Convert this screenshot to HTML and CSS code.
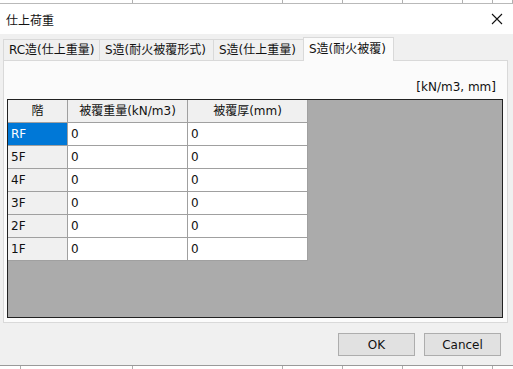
FILE: index.html
```html
<!DOCTYPE html>
<html>
<head>
<meta charset="utf-8">
<title>仕上荷重</title>
<link rel="stylesheet" href="styles.css">
</head>
<body>
<div class="app-strip">
	<span></span><span></span><span></span><span></span><span></span><span></span><span></span>
</div>
<div class="dialog">
	<div class="titlebar">
		<span class="title">仕上荷重</span>
		<svg class="close" width="12" height="12" viewBox="0 0 12 12"><path d="M1 1 L11 11 M11 1 L1 11" stroke="#111" stroke-width="1.1" fill="none"/></svg>
	</div>
	<div class="dialog-body">
		<div class="tabs">
			<div class="tab tab-rc">RC造(仕上重量)</div>
			<div class="tab tab-sf">S造(耐火被覆形式)</div>
			<div class="tab tab-sw">S造(仕上重量)</div>
			<div class="tab tab-sc active">S造(耐火被覆)</div>
		</div>
		<div class="panel">
			<div class="unit">[kN/m3, mm]</div>
			<div class="gridview">
				<div class="grid">
					<div class="cell head center">階</div>
					<div class="cell head center">被覆重量(kN/m3)</div>
					<div class="cell head center">被覆厚(mm)</div>

					<div class="cell rowhead selected">RF</div>
					<div class="cell">0</div>
					<div class="cell">0</div>

					<div class="cell rowhead">5F</div>
					<div class="cell">0</div>
					<div class="cell">0</div>

					<div class="cell rowhead">4F</div>
					<div class="cell">0</div>
					<div class="cell">0</div>

					<div class="cell rowhead">3F</div>
					<div class="cell">0</div>
					<div class="cell">0</div>

					<div class="cell rowhead">2F</div>
					<div class="cell">0</div>
					<div class="cell">0</div>

					<div class="cell rowhead">1F</div>
					<div class="cell">0</div>
					<div class="cell">0</div>
				</div>
			</div>
		</div>
		<div class="buttons">
			<button>OK</button>
			<button>Cancel</button>
		</div>
	</div>
</div>
<div class="app-strip bottom">
	<span></span><span></span><span></span><span></span><span></span><span></span><span></span>
</div>
</body>
</html>
```

FILE: styles.css
```css
*{box-sizing:border-box;}
html,body{margin:0;padding:0;background:#fff;}
body{width:513px;height:369px;overflow:hidden;font-family:"DejaVu Sans","Noto Sans CJK JP",sans-serif;font-size:12px;color:#111;}

/* 後ろのアプリ */
.app-strip{height:4px;background:#fff;border-bottom:1px solid #b9b9b9;display:grid;grid-template-columns:133px 150px 60px 60px 60px 30px 20px;}
.app-strip span{border-right:1px solid #b0b0b0;}
.app-strip.bottom{height:4px;border-bottom:none;border-top:1px solid #9a9a9a;grid-template-columns:21px 112px 150px 60px 60px 60px 30px;}

/* ダイアログ */
.titlebar{height:30px;background:#fff;display:flex;align-items:center;justify-content:space-between;padding:0 10px 0 6px;}
.title{font-size:12px;}
.close{display:block;}
.dialog-body{background:#f0f0f0;height:331px;padding:3px 5px 0 3px;}

.tabs{display:flex;align-items:flex-end;height:24px;}
.tab{height:22px;line-height:20px;padding:0 5px;border:1px solid #d9d9d9;border-right:none;background:#f0f0f0;white-space:nowrap;overflow:hidden;}
.tab-rc{width:96px;}
.tab-sf{width:114px;}
.tab-sw{width:90px;}
.tab-sc{width:91px;}
.tab.active{height:24px;line-height:22px;background:#fbfbfb;border:1px solid #d9d9d9;border-bottom:none;position:relative;z-index:1;}

.panel{margin-top:-1px;height:263px;background:#fbfbfb;border:1px solid #d9d9d9;padding:0 4px 4px 3px;display:flex;flex-direction:column;}
.unit{text-align:right;padding:15px 7px 0 0;height:38px;line-height:22px;}
.gridview{flex:1;background:#ababab;border:1px solid #222;}
.grid{display:grid;grid-template-columns:60px 120px 120px;grid-auto-rows:23px;}
.cell{background:#fff;border-right:1px solid #a0a0a0;border-bottom:1px solid #a0a0a0;padding:0 3px;line-height:22px;white-space:nowrap;}
.cell.head,.cell.rowhead{background:#f0f0f0;}
.cell.center{text-align:center;}
.cell.selected{background:#0078d7;color:#fff;}

.buttons{display:flex;justify-content:flex-end;gap:9px;padding:10px 7px 0 0;}
button{width:77px;height:23px;background:#e1e1e1;border:1px solid #adadad;font-family:inherit;font-size:12px;color:#111;padding:0;}
```
